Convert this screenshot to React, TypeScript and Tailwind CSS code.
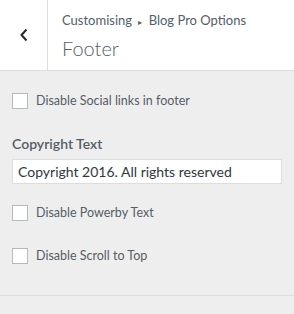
import React from 'react';

function Check({ label }: { label: string }) {
  return (
    <label className="flex items-center h-4 text-[12.5px] text-[#555d66]">
      <span className="w-4 h-4 border border-[#b4b9be] bg-white shrink-0" />
      <span className="ml-2 leading-none">{label}</span>
    </label>
  );
}

export default function App() {
  return (
    <div className="w-[294px] h-[314px] bg-[#eeeeee] font-['Lato']">
      {/* Header */}
      <div className="flex h-[71px] bg-white border-b border-[#dddddd]">
        <button className="w-[48px] border-r border-[#dddddd] flex items-center justify-center text-[#23282d]">
          <svg width="10" height="14" viewBox="0 0 10 14" fill="none">
            <path d="M7.5 1.5 L2.5 7 L7.5 12.5" stroke="currentColor" strokeWidth="2" />
          </svg>
        </button>
        <div className="pl-[14px] pt-[10px] text-[#555d66]">
          <div className="text-[13px] leading-[20px]">
            Customising <span className="text-[8px] align-middle mx-[3px]">▸</span> Blog Pro Options
          </div>
          <div className="text-[20px] font-light leading-[26px] mt-[3px]">Footer</div>
        </div>
      </div>

      <div className="px-3 pt-[22px]">
        <Check label="Disable Social links in footer" />
        <div className="mt-[25px] text-[14px] font-semibold text-[#555d66] leading-5">Copyright Text</div>
        <div className="mt-[5px] h-[25px] bg-white border border-[#dddddd] flex items-center px-[5px] text-[14px] text-[#32373c]">
          Copyright 2016. All rights reserved
        </div>
        <div className="mt-[21px]">
          <Check label="Disable Powerby Text" />
        </div>
        <div className="mt-[27px]">
          <Check label="Disable Scroll to Top" />
        </div>
      </div>
      <div className="mt-[31px] border-t border-[#dddddd]" />
    </div>
  );
}
